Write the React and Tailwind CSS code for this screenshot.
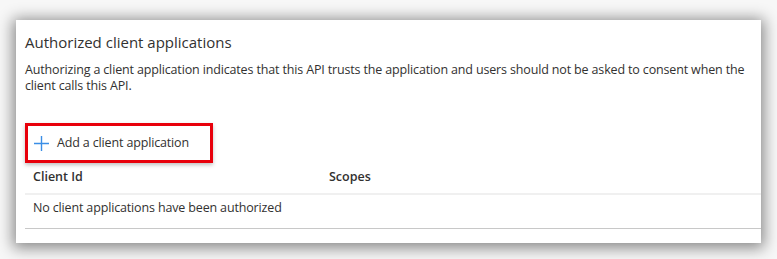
const font = { fontFamily: '"Open Sans", "Noto Sans", sans-serif' };

const PlusIcon = () => (
    <svg width="15" height="15" viewBox="0 0 15 15" className="shrink-0">
        <path d="M7.5 0v15M0 7.5h15" stroke="#3a8ee6" strokeWidth="1.4" fill="none" />
    </svg>
);

const App = () => {
    return (
        <div
            className="w-[777px] h-[259px] bg-[#f7f7f7] pt-[20px] pl-[16px] overflow-hidden text-[#323130]"
            style={font}
        >
            <section className="w-[745px] h-[223px] bg-white shadow-[0_2px_14px_3px_rgba(0,0,0,0.45)] pl-[9px] pt-[11px]">
                <h2 className="text-[15px] leading-[22px] font-normal">
                    Authorized client applications
                </h2>
                <p className="mt-[9px] text-[12.5px] leading-[16px] pr-[10px] tracking-[-0.15px]">
                    Authorizing a client application indicates that this API trusts the application and users should not be asked to consent when the client calls this API.
                </p>

                <button
                    type="button"
                    className="mt-[29px] flex h-[40px] w-[188px] items-center border-[3px] border-[#e8000b] pl-[6px] shadow-[0_2px_4px_rgba(0,0,0,0.25)]"
                >
                    <PlusIcon />
                    <span className="ml-[8px] text-[12.5px] leading-[18px] tracking-[-0.15px]">
                        Add a client application
                    </span>
                </button>

                <div className="text-[12.5px] leading-[18px]">
                    <div className="flex h-[32px] border-b-2 border-[#f0f0f0] px-[8px] pt-[5px] font-semibold">
                        <span className="w-[296px]">Client Id</span>
                        <span>Scopes</span>
                    </div>
                    <div className="h-[34px] border-b border-[#c8c8c8] px-[8px] pt-[4px] tracking-[-0.15px]">
                        No client applications have been authorized
                    </div>
                </div>
            </section>
        </div>
    );
};

export default App;
